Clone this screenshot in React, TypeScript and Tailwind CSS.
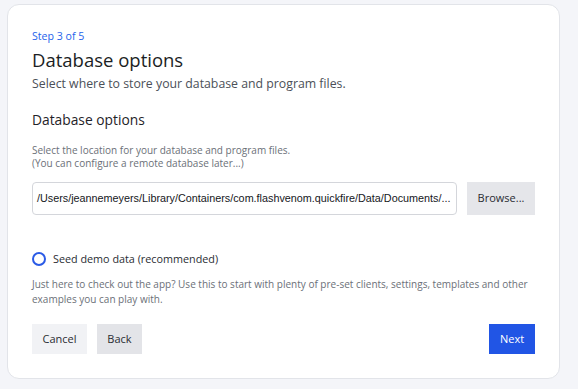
export default function App() {
  return (
    <div className="min-h-screen bg-[#f4f5f9] pl-[7px] pt-[4px] font-['Open_Sans',sans-serif]">
      <div className="w-[553px] h-[375px] rounded-xl border border-[#e2e4e9] bg-white px-6 pt-[24px] flex flex-col">
        <p className="text-[10.6px] leading-[15px] text-[#2563eb]">Step 3 of 5</p>
        <h1 className="mt-[3px] text-[18.5px] leading-[26px] text-[#1b1e23]">Database options</h1>
        <p className="mt-[2px] text-[12.3px] leading-[18px] text-[#4b5058]">
          Select where to store your database and program files.
        </p>

        <h2 className="mt-[17px] text-[13.8px] leading-[20px] text-[#1f2328]">Database options</h2>
        <p className="mt-[14px] text-[10px] leading-[13px] text-[#6b7078]">
          Select the location for your database and program files.
          <br />
          (You can configure a remote database later...)
        </p>

        <div className="mt-[12px] flex gap-[10px]">
          <div className="flex-1 h-[33px] rounded border border-[#d4d6db] px-[4px] flex items-center overflow-hidden">
            <span className="whitespace-nowrap font-['Liberation_Sans',sans-serif] text-[10.8px] text-[#15171b]">
              /Users/jeannemeyers/Library/Containers/com.flashvenom.quickfire/Data/Documents/...
            </span>
          </div>
          <button className="w-[68px] h-[33px] bg-[#e5e6ea] text-[11px] text-[#2a2d33]">Browse...</button>
        </div>

        <label className="mt-[36px] flex items-center gap-[7px]">
          <span className="w-[14px] h-[14px] rounded-full border-2 border-[#2b5be6]" />
          <span className="text-[10.8px] leading-[16px] text-[#2a2d33]">Seed demo data (recommended)</span>
        </label>
        <p className="mt-[10px] text-[10px] leading-[15px] text-[#6b7078]">
          Just here to check out the app? Use this to start with plenty of pre-set clients, settings, templates and other
          examples you can play with.
        </p>

        <div className="mt-auto mb-6 flex items-center">
          <button className="h-[30px] w-[55px] bg-[#f1f2f5] text-[11px] text-[#2a2d33]">Cancel</button>
          <button className="ml-[10px] h-[30px] w-[45px] bg-[#e3e4e8] text-[11px] text-[#2a2d33]">Back</button>
          <button className="ml-auto h-[30px] w-[46px] bg-[#2155e5] text-[11px] font-medium text-white">Next</button>
        </div>
      </div>
    </div>
  );
}
